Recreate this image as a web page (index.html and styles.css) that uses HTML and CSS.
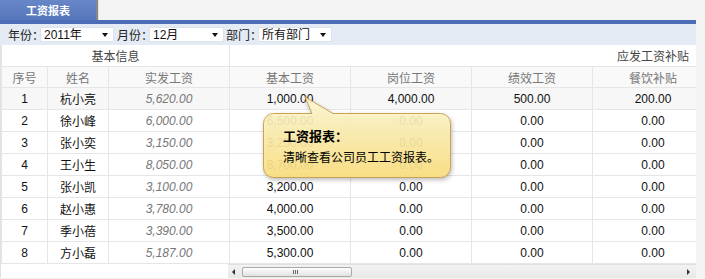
FILE: index.html
```html
<!DOCTYPE html>
<html>
<head>
    <title>工资报表</title>
    <link rel="stylesheet" href="styles.css">
</head>
<body>

    <div class="page">
        <div class="tabs">
            <div class="tab"><span>工资报表</span></div>
        </div>

        <div class="panel">
            <div class="toolbar">
                <span class="lbl">年份：</span>
                <div class="select s-year"><span>2011年</span><i class="caret"></i></div>
                <span class="lbl">月份：</span>
                <div class="select s-month"><span>12月</span><i class="caret"></i></div>
                <span class="lbl">部门：</span>
                <div class="select s-dept"><span>所有部门</span><i class="caret"></i></div>
            </div>

            <div class="grid">
                <table>
                    <colgroup>
                        <col class="c-no"><col class="c-name"><col class="c-money">
                        <col class="c-money"><col class="c-money"><col class="c-money"><col class="c-money">
                        <col class="c-rest">
                    </colgroup>
                    <thead>
                        <tr class="group">
                            <th colspan="3">基本信息</th>
                            <th colspan="5">应发工资补贴</th>
                        </tr>
                        <tr class="cols">
                            <th>序号</th>
                            <th>姓名</th>
                            <th>实发工资</th>
                            <th>基本工资</th>
                            <th>岗位工资</th>
                            <th>绩效工资</th>
                            <th>餐饮补贴</th>
                            <th></th>
                        </tr>
                    </thead>
                    <tbody>
                        <tr class="hl"><td>1</td><td>杭小亮</td><td class="paid">5,620.00</td><td>1,000.00</td><td>4,000.00</td><td>500.00</td><td>200.00</td><td></td></tr>
                        <tr><td>2</td><td>徐小峰</td><td class="paid">6,000.00</td><td>6,500.00</td><td>0.00</td><td>0.00</td><td>0.00</td><td></td></tr>
                        <tr><td>3</td><td>张小奕</td><td class="paid">3,150.00</td><td>3,250.00</td><td>0.00</td><td>0.00</td><td>0.00</td><td></td></tr>
                        <tr><td>4</td><td>王小生</td><td class="paid">8,050.00</td><td>8,700.00</td><td>0.00</td><td>0.00</td><td>0.00</td><td></td></tr>
                        <tr><td>5</td><td>张小凯</td><td class="paid">3,100.00</td><td>3,200.00</td><td>0.00</td><td>0.00</td><td>0.00</td><td></td></tr>
                        <tr><td>6</td><td>赵小惠</td><td class="paid">3,780.00</td><td>4,000.00</td><td>0.00</td><td>0.00</td><td>0.00</td><td></td></tr>
                        <tr><td>7</td><td>季小蓓</td><td class="paid">3,390.00</td><td>3,500.00</td><td>0.00</td><td>0.00</td><td>0.00</td><td></td></tr>
                        <tr><td>8</td><td>方小磊</td><td class="paid">5,187.00</td><td>5,300.00</td><td>0.00</td><td>0.00</td><td>0.00</td><td></td></tr>
                    </tbody>
                </table>
            </div>

            <div class="hscroll">
                <div class="frozen"></div>
                <div class="track">
                    <i class="arrow left"></i>
                    <div class="thumb"><span class="grip"></span></div>
                    <i class="arrow right"></i>
                </div>
            </div>
        </div>

        <div class="callout">
            <svg class="bubble" width="196" height="92" viewBox="0 0 196 92">
                <defs>
                    <linearGradient id="tipFill" x1="0" y1="0" x2="0" y2="1">
                        <stop offset="0" stop-color="#fffbd6" stop-opacity="0.9"/>
                        <stop offset="1" stop-color="#fde07f" stop-opacity="0.92"/>
                    </linearGradient>
                </defs>
                <path d="M14.5,19.5 H53 L46,3 L74,19.5 H181.5 A10,10 0 0 1 191.5,29.5 V73.5 A10,10 0 0 1 181.5,83.5 H14.5 A10,10 0 0 1 4.5,73.5 V29.5 A10,10 0 0 1 14.5,19.5 Z"
                      fill="url(#tipFill)" stroke="#c9a256" stroke-width="1"/>
            </svg>
            <div class="tip-title">工资报表：</div>
            <div class="tip-text">清晰查看公司员工工资报表。</div>
        </div>
    </div>

</body>
</html>
```

FILE: styles.css
```css
html, body {
    height: 100%; width: 100%;
}
body {
    margin: 0;
    background: #F4F4F4;
    font: 12px "Liberation Sans", "Noto Sans CJK SC", sans-serif;
    color: #222;
}
.page {
    position: relative;
    height: 279px;
    overflow: hidden;
}

/* tab strip */
.tabs {
    height: 20px;
    display: flex;
}
.tab {
    flex: 0 0 96px;
    height: 20px;
    display: flex;
    align-items: center;
    justify-content: center;
    font-size: 11px;
    color: #FFF;
    font-weight: bold;
    background: linear-gradient(#6787C9, #5676BB);
    box-shadow: 2px 0 1px rgba(0,0,0,.45);
}

.panel {
    width: 696px;
    border-top: 4px solid #4D6EB6;
    position: relative;
}

/* filter bar */
.toolbar {
    height: 21px;
    display: flex;
    align-items: center;
    padding-left: 8px;
    background: #E4EBF4;
    color: #222;
}
.lbl {
    width: 32px;
    white-space: nowrap;
}
.select {
    position: relative;
    height: 15px;
    line-height: 15px;
    background: #FFF;
    border: 1px solid #DCE3EC;
    box-sizing: border-box;
    padding-left: 3px;
    margin-right: 3px;
    color: #111;
}
.s-year  { width: 74px; }
.s-month { width: 75px; margin-right: 2px; }
.s-dept  { width: 74px; }
.caret {
    position: absolute;
    right: 5px; top: 5px;
    width: 0; height: 0;
    border-left: 3px solid transparent;
    border-right: 3px solid transparent;
    border-top: 4px solid #111;
}

.grid {
    width: 696px;
    overflow: hidden;
    background: #FFF;
    border-left: 1px solid #E2E2E2;
    box-sizing: border-box;
}
.grid table {
    width: 1075px;
    table-layout: fixed;
    border-collapse: collapse;
}
.c-no    { width: 46px; }
.c-name  { width: 61px; }
.c-money { width: 121px; }
.c-rest  { width: 363px; }

.grid th, .grid td {
    padding: 0;
    text-align: center;
    white-space: nowrap;
    overflow: hidden;
    border: 1px solid #E6E6E6;
}
.grid tr.group th {
    height: 21px;
    font-weight: normal;
    color: #444;
    background: #FFF;
    border-top: 0;
}
.grid tr.cols th {
    height: 20px;
    font-weight: normal;
    color: #777;
    background: #F9F9F9;
}
.grid td {
    height: 21px;
    color: #111;
}
.grid tr.hl td {
    background: #F7F7F7;
}
.grid td.paid {
    font-style: italic;
    color: #777;
}

/* horizontal scroll bar */
.hscroll {
    display: flex;
    height: 14px;
}
.frozen {
    width: 228px;
    background: #FFF;
    border-left: 1px solid #E2E2E2;
    box-sizing: border-box;
}
.track {
    flex: 1;
    position: relative;
    background: linear-gradient(#F2F2F2, #E8E8E8);
    border-top: 1px solid #E0E0E0;
    box-sizing: border-box;
}
.arrow {
    position: absolute;
    top: 4px;
    width: 0; height: 0;
    border-top: 3px solid transparent;
    border-bottom: 3px solid transparent;
}
.arrow.left  { left: 4px;  border-right: 3px solid #333; }
.arrow.right { right: 6px; border-left: 3px solid #333; }
.thumb {
    position: absolute;
    left: 14px; top: 2px;
    width: 110px; height: 10px;
    box-sizing: border-box;
    border: 1px solid #A9A9A9;
    border-radius: 2px;
    background: linear-gradient(#FDFDFD, #E2E2E2);
}
.grip {
    position: absolute;
    left: 50px; top: 2px;
    width: 1px; height: 4px;
    background: #666;
    box-shadow: 2px 0 0 #666, 4px 0 0 #666;
}

/* yellow hint bubble */
.callout {
    position: absolute;
    left: 259px; top: 94px;
    width: 196px; height: 92px;
}
.bubble {
    position: absolute;
    left: 0; top: 0;
    filter: drop-shadow(1px 2px 2px rgba(0,0,0,.28));
}
.tip-title, .tip-text {
    position: relative;
    margin-left: 24px;
    line-height: 16px;
    color: #000;
}
.tip-title {
    margin-top: 35px;
    font-size: 13px;
    font-weight: bold;
}
.tip-text {
    margin-top: 5px;
    font-size: 12px;
}
```
